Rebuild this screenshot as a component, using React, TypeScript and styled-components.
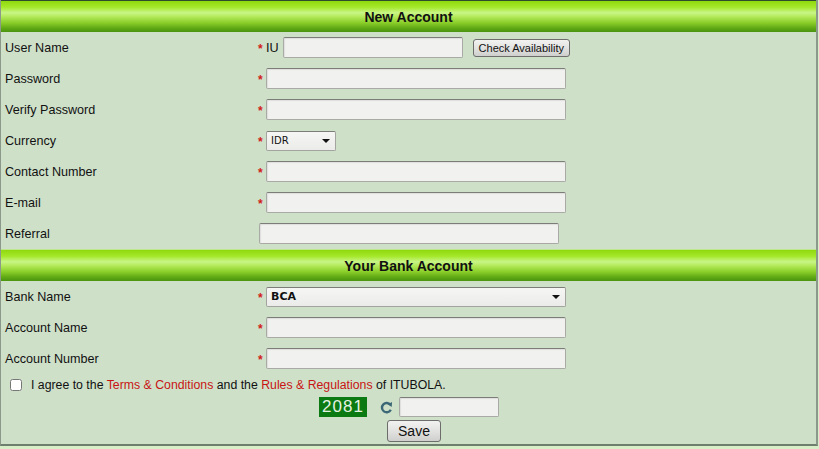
import React, { useState } from "react";
import styled, { createGlobalStyle } from "styled-components";

const Global = createGlobalStyle`
  html, body { margin: 0; padding: 0; }
  body {
    background: #d7eec8;
    font-family: "Liberation Sans", Arial, sans-serif;
    font-size: 12px;
    color: #111;
  }
`;

const Box = styled.div`
  width: 818px;
  background: #cfe0c9;
  border-left: 1px solid #8a998a;
  border-right: 2px solid #8a998a;
  border-bottom: 2px solid #6f7f6f;
  box-sizing: border-box;
  padding-bottom: 2px;
`;

const Header = styled.div<{ $top?: boolean }>`
  height: 31px;
  border-top: 1px solid ${(p) => (p.$top ? "#2f4d2a" : "#bfe68a")};
  background: linear-gradient(
    to bottom,
    #8fd80e 0%,
    #a5e82a 20%,
    #c9f588 38%,
    #b4ea5c 50%,
    #8bcf2a 70%,
    #5fa814 88%,
    #4a9410 100%
  );
  display: flex;
  align-items: center;
  justify-content: center;
  font-weight: bold;
  font-size: 14px;
  color: #111;
`;

const Row = styled.div`
  display: grid;
  grid-template-columns: 255px 1fr;
  align-items: center;
  height: 31px;
`;

const Label = styled.div`
  padding-left: 4px;
  font-size: 12.6px;
`;

const Field = styled.div<{ $pad?: number }>`
  display: flex;
  align-items: center;
  padding-left: ${(p) => p.$pad ?? 0}px;
`;

const Star = styled.span`
  color: #d21c1c;
  font-weight: bold;
  width: 8px;
  padding-left: 2px;
  font-size: 12px;
  line-height: 12px;
  margin-top: 2px;
`;

const Prefix = styled.span`
  margin-right: 4px;
  font-size: 12.6px;
`;

const Input = styled.input<{ $w: number }>`
  width: ${(p) => p.$w}px;
  height: 21px;
  box-sizing: border-box;
  border: 1px solid #a9aaa6;
  border-top-color: #7c7d79;
  border-radius: 2px;
  background: #f1f1ef;
  box-shadow: inset 1px 1px 1px rgba(0, 0, 0, 0.08);
  padding: 0 4px;
  font-family: inherit;
  font-size: 12px;
  outline: none;
`;

const SelectBox = styled.div<{ $w: number; $bold?: boolean }>`
  width: ${(p) => p.$w}px;
  height: 20px;
  box-sizing: border-box;
  border: 1px solid #a3a49f;
  border-top-color: #7c7d79;
  border-radius: 2px;
  background: linear-gradient(to bottom, #f6f6f4, #ebebe9);
  display: flex;
  align-items: center;
  justify-content: space-between;
  padding: 0 5px 0 4px;
  font-family: Tahoma, "DejaVu Sans", sans-serif;
  font-size: ${(p) => (p.$bold ? 11 : 10)}px;
  font-weight: ${(p) => (p.$bold ? "bold" : "normal")};
`;

const Arrow = styled.span`
  width: 0;
  height: 0;
  border-left: 4px solid transparent;
  border-right: 4px solid transparent;
  border-top: 4px solid #111;
`;

const Button = styled.button<{ $size?: number }>`
  font-family: "Liberation Sans", Arial, sans-serif;
  font-size: ${(p) => p.$size ?? 12}px;
  color: #111;
  background: linear-gradient(to bottom, #f2f2f0 0%, #e2e2e0 50%, #cfcfcd 100%);
  border: 1px solid #6d6d6b;
  border-radius: 3px;
  padding: 0 5px;
  cursor: pointer;
`;

const AgreeRow = styled.label`
  display: flex;
  align-items: center;
  gap: 9px;
  padding: 2px 0 0 9px;
  height: 18px;
  font-size: 12.3px;
`;

const Check = styled.input`
  margin: 0;
  width: 12px;
  height: 12px;
`;

const Red = styled.span`
  color: #c81414;
`;

const Captcha = styled.div`
  display: flex;
  align-items: center;
  padding-left: 318px;
  margin-top: 3px;
  height: 20px;
`;

const Code = styled.div`
  background: #0b7a12;
  color: #e6f2e4;
  font-size: 17px;
  letter-spacing: 1px;
  width: 48px;
  height: 20px;
  line-height: 20px;
  text-align: center;
`;

const Refresh = styled.span`
  display: flex;
  margin: 0 6px 0 13px;
`;

const SaveLine = styled.div`
  padding-left: 386px;
  margin-top: 3px;
`;

function Req() {
  return <Star>*</Star>;
}

export default function App() {
  const [agree, setAgree] = useState(false);
  return (
    <>
      <Global />
      <Box>
        <Header $top>New Account</Header>
        <Row>
          <Label>User Name</Label>
          <Field>
            <Req />
            <Prefix>IU</Prefix>
            <Input $w={180} />
            <Button $size={11} style={{ marginLeft: 10, height: 18 }}>Check Availability</Button>
          </Field>
        </Row>
        <Row>
          <Label>Password</Label>
          <Field>
            <Req />
            <Input $w={300} type="password" />
          </Field>
        </Row>
        <Row>
          <Label>Verify Password</Label>
          <Field>
            <Req />
            <Input $w={300} type="password" />
          </Field>
        </Row>
        <Row>
          <Label>Currency</Label>
          <Field>
            <Req />
            <SelectBox $w={70}>
              IDR
              <Arrow />
            </SelectBox>
          </Field>
        </Row>
        <Row>
          <Label>Contact Number</Label>
          <Field>
            <Req />
            <Input $w={300} />
          </Field>
        </Row>
        <Row>
          <Label>E-mail</Label>
          <Field>
            <Req />
            <Input $w={300} />
          </Field>
        </Row>
        <Row>
          <Label>Referral</Label>
          <Field $pad={3}>
            <Input $w={300} />
          </Field>
        </Row>
        <Header>Your Bank Account</Header>
        <Row>
          <Label>Bank Name</Label>
          <Field>
            <Req />
            <SelectBox $w={300} $bold>
              BCA
              <Arrow />
            </SelectBox>
          </Field>
        </Row>
        <Row>
          <Label>Account Name</Label>
          <Field>
            <Req />
            <Input $w={300} />
          </Field>
        </Row>
        <Row>
          <Label>Account Number</Label>
          <Field>
            <Req />
            <Input $w={300} />
          </Field>
        </Row>
        <AgreeRow>
          <Check type="checkbox" checked={agree} onChange={(e) => setAgree(e.target.checked)} />
          <span>
            I agree to the <Red>Terms &amp; Conditions</Red> and the <Red>Rules &amp; Regulations</Red> of ITUBOLA.
          </span>
        </AgreeRow>
        <Captcha>
          <Code>2081</Code>
          <Refresh>
            <svg width="13" height="13" viewBox="0 0 14 14">
              <path
                d="M11.2 4.2 A5 5 0 1 0 11.6 9.4"
                fill="none"
                stroke="#3b6776"
                strokeWidth="2.6"
              />
              <path d="M8.4 3.6 L13 1.2 L12.6 6.4 Z" fill="#3b6776" />
            </svg>
          </Refresh>
          <Input $w={100} style={{ height: 20 }} />
        </Captcha>
        <SaveLine>
          <Button $size={14} style={{ height: 22, width: 54 }}>Save</Button>
        </SaveLine>
      </Box>
    </>
  );
}
